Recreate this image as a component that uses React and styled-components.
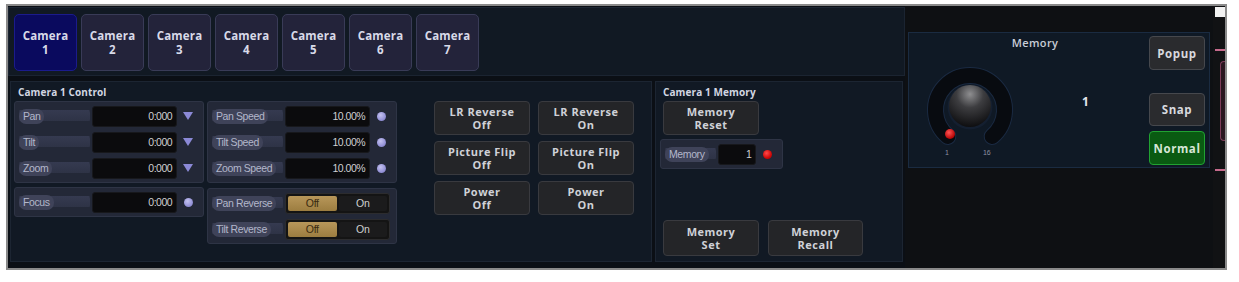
import React from 'react';
import styled, { createGlobalStyle } from 'styled-components';

const Global = createGlobalStyle`
  html, body { margin: 0; padding: 0; background: #ffffff; }
  body { font-family: "Open Sans", "Liberation Sans", sans-serif; }
  * { box-sizing: border-box; }
`;

const Page = styled.div`
  padding: 4px 0 0 6px;
`;

const Frame = styled.div`
  width: 1221px;
  height: 266px;
  border: 2px solid #8a8a8a;
  background: #0b0f15;
  display: flex;
`;

const LeftColumn = styled.div`
  width: 897px;
  display: flex;
  flex-direction: column;
  padding-top: 1px;
`;

const TopBar = styled.div`
  height: 69px;
  background: #111923;
  border: 1px solid #1b2431;
  padding: 5px;
  display: flex;
  gap: 4px;
`;

const CamTab = styled.button`
  width: 63px;
  height: 57px;
  margin-top: 1px;
  border-radius: 5px;
  border: 1px solid ${p => (p.$active ? '#1b1b8c' : '#393b57')};
  background: ${p => (p.$active ? '#0a0a5e' : '#23233a')};
  color: #d8dae8;
  font-family: "Open Sans", "Liberation Sans", sans-serif;
  font-weight: 700;
  font-size: 11.5px;
  line-height: 14px;
  letter-spacing: 0.2px;
  padding: 0;
  display: flex;
  flex-direction: column;
  align-items: center;
  justify-content: center;
`;

const LowerRow = styled.div`
  display: flex;
  gap: 3px;
  padding-left: 2px;
  margin-top: 5px;
`;

const Panel = styled.div`
  height: 181px;
  background: #111924;
  border: 1px solid #1c2532;
  display: flex;
  flex-direction: column;
`;

const ControlPanel = styled(Panel)`
  width: 642px;
  padding: 3px;
`;

const MemoryPanel = styled(Panel)`
  width: 248px;
  padding: 3px 7px 5px;
`;

const PanelTitle = styled.div`
  height: 15px;
  line-height: 15px;
  font-size: 10px;
  font-weight: 700;
  color: #d2d6e2;
  padding-left: ${p => p.$indent || 0}px;
  letter-spacing: 0.1px;
`;

const ControlBody = styled.div`
  display: flex;
  margin-top: 1px;
`;

const GroupColumn = styled.div`
  width: 190px;
  display: flex;
  flex-direction: column;
  gap: ${p => p.$gap}px;
  margin-right: 3px;
`;

const Group = styled.div`
  background: #232837;
  border: 1px solid #2e3445;
  border-radius: 3px;
  padding: 4px;
  display: flex;
  flex-direction: column;
  gap: 6px;
  width: ${p => (p.$width ? `${p.$width}px` : 'auto')};
`;

const Row = styled.div`
  height: 20px;
  display: flex;
  align-items: center;
`;

const Slot = styled.div`
  width: ${p => p.$width}px;
  height: 20px;
  display: flex;
  align-items: center;
  border-radius: 7px;
  background: linear-gradient(
    to bottom,
    transparent 4px,
    #353a50 4px,
    #2e3346 15px,
    transparent 15px
  );
`;

const Pill = styled.div`
  height: 15px;
  line-height: 15px;
  padding: 0 4px;
  border-radius: 7px;
  background: #3f4359;
  color: #b3b7cb;
  font-family: "Liberation Sans", Arial, sans-serif;
  font-size: 10.5px;
  letter-spacing: -0.4px;
  white-space: nowrap;
`;

const ValueBox = styled.div`
  width: ${p => p.$width}px;
  height: 21px;
  margin-left: 2px;
  background: #0b0b0d;
  border: 1px solid #17181c;
  border-radius: 3px;
  color: #d0d0d2;
  font-family: "Liberation Sans", Arial, sans-serif;
  font-size: 10.5px;
  letter-spacing: -0.5px;
  text-align: right;
  line-height: 19px;
  padding-right: 4px;
`;

const Indicator = styled.div`
  width: 22px;
  display: flex;
  justify-content: center;
  align-items: center;
`;

const Triangle = styled.div`
  width: 0;
  height: 0;
  border-left: 5px solid transparent;
  border-right: 5px solid transparent;
  border-top: 8px solid #8b89d6;
`;

const Dot = styled.div`
  width: 9px;
  height: 9px;
  border-radius: 50%;
  background: ${p =>
    p.$red
      ? 'radial-gradient(circle at 40% 35%, #ff4a4a, #d00808 60%, #a00000)'
      : 'radial-gradient(circle at 40% 35%, #c4c2f0, #9593d8 60%, #7674b8)'};
`;

const Toggle = styled.div`
  width: 105px;
  height: 21px;
  margin-left: 2px;
  background: #141414;
  border: 1px solid #2c2c2e;
  border-radius: 3px;
  padding: 2px;
  display: flex;
  gap: 2px;
`;

const Segment = styled.div`
  flex: 1;
  border-radius: 2px;
  background: ${p => (p.$on ? 'linear-gradient(#b8975a, #9c7d40)' : '#1b1b1c')};
  color: ${p => (p.$on ? '#3a2b10' : '#cfcfcf')};
  font-family: "Liberation Sans", Arial, sans-serif;
  font-size: 10.5px;
  text-align: center;
  line-height: 15px;
  letter-spacing: -0.3px;
`;

const ButtonGrid = styled.div`
  margin-left: 34px;
  display: grid;
  grid-template-columns: 96px 96px;
  grid-auto-rows: 34px;
  column-gap: 8px;
  row-gap: 6px;
  align-self: flex-start;
`;

const Btn = styled.button`
  width: ${p => p.$width || 96}px;
  height: ${p => p.$height || 34}px;
  padding: 0;
  border-radius: 4px;
  border: 1px solid #393a3f;
  background: #242528;
  color: #cfd1d7;
  font-family: "Open Sans", "Liberation Sans", sans-serif;
  font-weight: 700;
  font-size: 11px;
  line-height: 13px;
  letter-spacing: 0.5px;
  display: flex;
  flex-direction: column;
  align-items: center;
  justify-content: center;
`;

const MemoryResetWrap = styled.div`
  margin-top: 1px;
`;

const MemGroupWrap = styled.div`
  margin-top: 4px;
  margin-left: -3px;
`;

const Spacer = styled.div`
  flex: 1;
`;

const BottomButtons = styled.div`
  display: flex;
  gap: 9px;
`;

const RightColumn = styled.div`
  width: 308px;
  background: #0e1013;
  padding: 26px 3px 0;
`;

const MemPanel = styled.div`
  height: 136px;
  background: #0f1925;
  border: 1px solid #1a2b41;
  display: flex;
  padding-right: 4px;
`;

const MemMain = styled.div`
  flex: 1;
  display: flex;
  flex-direction: column;
`;

const MemTitle = styled.div`
  margin-top: 3px;
  padding-left: 12px;
  text-align: center;
  font-size: 11px;
  font-weight: 600;
  line-height: 14px;
  color: #c9cdd8;
  letter-spacing: 0.4px;
`;

const KnobRow = styled.div`
  display: flex;
  margin-top: 15px;
`;

const KnobColumn = styled.div`
  margin-left: 16px;
  width: 90px;
  display: flex;
  flex-direction: column;
`;

const KnobLabels = styled.div`
  display: flex;
  height: 8px;
  font-family: "Liberation Sans", Arial, sans-serif;
  font-size: 7px;
  line-height: 8px;
  color: #8c92a2;
`;

const KnobLabel = styled.span`
  margin-left: ${p => p.$offset}px;
`;

const BigValue = styled.div`
  margin-left: 67px;
  margin-top: 30px;
  font-size: 12px;
  font-weight: 700;
  line-height: 14px;
  color: #e4e6ec;
`;

const SideButtons = styled.div`
  width: 56px;
  display: flex;
  flex-direction: column;
  padding-top: 3px;
`;

const SideBtn = styled.button`
  width: 56px;
  height: ${p => p.$h}px;
  margin-top: ${p => p.$mt || 0}px;
  padding: 0;
  border-radius: 4px;
  border: 1px solid ${p => (p.$green ? '#21a232' : '#46484d')};
  background: ${p => (p.$green ? '#0a5a12' : '#2a2b2e')};
  color: ${p => (p.$green ? '#d6e6d6' : '#d8d9de')};
  font-family: "Open Sans", "Liberation Sans", sans-serif;
  font-weight: 700;
  font-size: 11.5px;
  letter-spacing: 0.6px;
`;

const Strip = styled.div`
  width: 12px;
  background: #111214;
  display: flex;
  flex-direction: column;
`;

const StripChip = styled.div`
  margin: 1px 0 0 2px;
  height: 10px;
  background: #f2f2f2;
`;

const StripLine = styled.div`
  margin: ${p => p.$mt}px 0 0 2px;
  height: 2px;
  background: #c56a8c;
`;

const StripTab = styled.div`
  margin: 10px 0 0 7px;
  height: 80px;
  background: #2a1620;
  border: 1px solid #7e3d5a;
  border-right: none;
  border-radius: 4px 0 0 4px;
`;

function ValueRow({ label, value, slot = 71, box = 86, mark }) {
  return (
    <Row>
      <Slot $width={slot}>
        <Pill>{label}</Pill>
      </Slot>
      <ValueBox $width={box}>{value}</ValueBox>
      <Indicator>
        {mark === 'tri' && <Triangle />}
        {mark === 'dot' && <Dot />}
        {mark === 'red' && <Dot $red />}
      </Indicator>
    </Row>
  );
}

function ToggleRow({ label }) {
  return (
    <Row>
      <Slot $width={71}>
        <Pill>{label}</Pill>
      </Slot>
      <Toggle>
        <Segment $on>Off</Segment>
        <Segment>On</Segment>
      </Toggle>
    </Row>
  );
}

function TwoLine({ a, b }) {
  return (
    <>
      <span>{a}</span>
      <span>{b}</span>
    </>
  );
}

const ARC = 'M22.82 71.43 A34.5 34.5 0 1 1 67.18 71.43';

function Knob() {
  return (
    <svg width="90" height="84" viewBox="0 0 90 84">
      <defs>
        <radialGradient id="ballGrad" cx="50%" cy="22%" r="80%">
          <stop offset="0" stopColor="#8e8e90" />
          <stop offset="0.4" stopColor="#3d3d40" />
          <stop offset="1" stopColor="#0c0c0e" />
        </radialGradient>
        <radialGradient id="redGrad" cx="40%" cy="35%" r="65%">
          <stop offset="0" stopColor="#ff5454" />
          <stop offset="1" stopColor="#b00000" />
        </radialGradient>
      </defs>
      <path d={ARC} stroke="#1a2a42" strokeWidth="17" fill="none" strokeLinecap="round" />
      <path d={ARC} stroke="#080b10" strokeWidth="15" fill="none" strokeLinecap="round" />
      <circle cx="45" cy="42" r="22.5" fill="#141f30" />
      <circle cx="45" cy="41" r="21" fill="url(#ballGrad)" />
      <circle cx="25" cy="69" r="5" fill="url(#redGrad)" />
    </svg>
  );
}

const cameras = [1, 2, 3, 4, 5, 6, 7];

export default function App() {
  return (
    <>
      <Global />
      <Page>
        <Frame>
          <LeftColumn>
            <TopBar>
              {cameras.map(n => (
                <CamTab key={n} $active={n === 1}>
                  <TwoLine a="Camera" b={n} />
                </CamTab>
              ))}
            </TopBar>
            <LowerRow>
              <ControlPanel>
                <PanelTitle $indent={4}>Camera 1 Control</PanelTitle>
                <ControlBody>
                  <GroupColumn $gap={4}>
                    <Group>
                      <ValueRow label="Pan" value="0:000" mark="tri" />
                      <ValueRow label="Tilt" value="0:000" mark="tri" />
                      <ValueRow label="Zoom" value="0:000" mark="tri" />
                    </Group>
                    <Group>
                      <ValueRow label="Focus" value="0:000" mark="dot" />
                    </Group>
                  </GroupColumn>
                  <GroupColumn $gap={5}>
                    <Group>
                      <ValueRow label="Pan Speed" value="10.00%" mark="dot" />
                      <ValueRow label="Tilt Speed" value="10.00%" mark="dot" />
                      <ValueRow label="Zoom Speed" value="10.00%" mark="dot" />
                    </Group>
                    <Group>
                      <ToggleRow label="Pan Reverse" />
                      <ToggleRow label="Tilt Reverse" />
                    </Group>
                  </GroupColumn>
                  <ButtonGrid>
                    <Btn><TwoLine a="LR Reverse" b="Off" /></Btn>
                    <Btn><TwoLine a="LR Reverse" b="On" /></Btn>
                    <Btn><TwoLine a="Picture Flip" b="Off" /></Btn>
                    <Btn><TwoLine a="Picture Flip" b="On" /></Btn>
                    <Btn><TwoLine a="Power" b="Off" /></Btn>
                    <Btn><TwoLine a="Power" b="On" /></Btn>
                  </ButtonGrid>
                </ControlBody>
              </ControlPanel>
              <MemoryPanel>
                <PanelTitle>Camera 1 Memory</PanelTitle>
                <MemoryResetWrap>
                  <Btn><TwoLine a="Memory" b="Reset" /></Btn>
                </MemoryResetWrap>
                <MemGroupWrap>
                  <Group $width={123}>
                    <ValueRow label="Memory" value="1" slot={52} box={39} mark="red" />
                  </Group>
                </MemGroupWrap>
                <Spacer />
                <BottomButtons>
                  <Btn $height={36}><TwoLine a="Memory" b="Set" /></Btn>
                  <Btn $height={36} $width={95}><TwoLine a="Memory" b="Recall" /></Btn>
                </BottomButtons>
              </MemoryPanel>
            </LowerRow>
          </LeftColumn>
          <RightColumn>
            <MemPanel>
              <MemMain>
                <MemTitle>Memory</MemTitle>
                <KnobRow>
                  <KnobColumn>
                    <Knob />
                    <KnobLabels>
                      <KnobLabel $offset={20}>1</KnobLabel>
                      <KnobLabel $offset={34}>16</KnobLabel>
                    </KnobLabels>
                  </KnobColumn>
                  <BigValue>1</BigValue>
                </KnobRow>
              </MemMain>
              <SideButtons>
                <SideBtn $h={34}>Popup</SideBtn>
                <SideBtn $h={33} $mt={23}>Snap</SideBtn>
                <SideBtn $h={34} $mt={5} $green>Normal</SideBtn>
              </SideButtons>
            </MemPanel>
          </RightColumn>
          <Strip>
            <StripChip />
            <StripLine $mt={32} />
            <StripTab />
            <StripLine $mt={28} />
          </Strip>
        </Frame>
      </Page>
    </>
  );
}
